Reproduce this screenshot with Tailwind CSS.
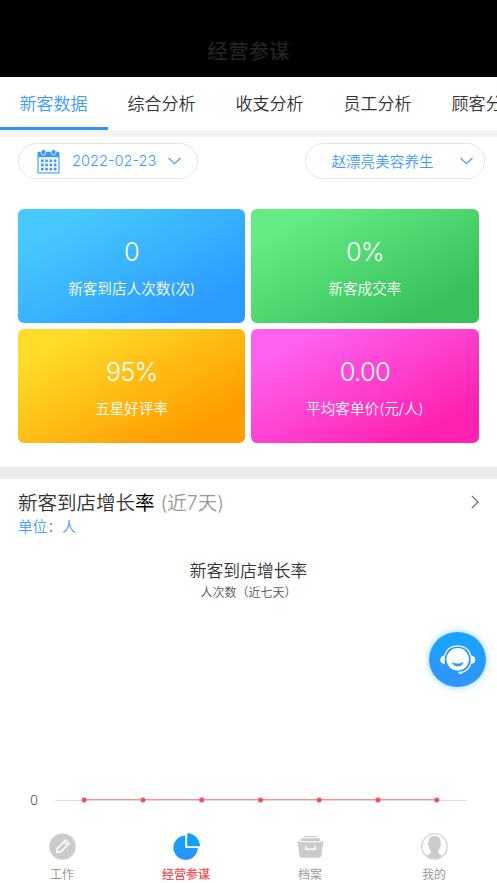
<!DOCTYPE html>
<html lang="zh-CN">
<head>
<meta charset="UTF-8">
<meta name="viewport" content="width=device-width, initial-scale=1">
<title>经营参谋</title>
<script src="https://cdn.jsdelivr.net/npm/@tailwindcss/browser@4"></script>
</head>
<body class="relative flex h-[883px] w-[497px] flex-col overflow-hidden bg-white font-[Inter,'Noto_Sans_CJK_SC',sans-serif] font-[350] text-[#333]">
  <header class="flex h-[77px] shrink-0 items-end justify-center bg-black pb-[10px]">
    <h1 class="text-[20.6px] leading-[30px] font-medium text-[#222]">经营参谋</h1>
  </header>

  <nav class="flex h-[53px] shrink-0 overflow-hidden text-[17px] leading-[55px]">
    <a class="w-[108px] shrink-0 border-b-[3px] border-[#2e95ff] pr-px text-center text-[#3b9aff]">新客数据</a>
    <a class="w-[108px] shrink-0 pr-px text-center">综合分析</a>
    <a class="w-[108px] shrink-0 pr-px text-center">收支分析</a>
    <a class="w-[108px] shrink-0 pr-px text-center">员工分析</a>
    <a class="w-[108px] shrink-0 pr-px text-center">顾客分析</a>
  </nav>
  <div class="h-[7px] shrink-0 bg-[#f4f4f4]"></div>

  <section class="mt-[6px] flex h-[36px] shrink-0 justify-between pr-[12px] pl-[18px] text-[14.6px] leading-[36px] text-[#3b9aff]">
    <button class="flex w-[180px] items-center rounded-full border border-[#e4e4e4] pl-[18px]">
      <svg class="h-[25px] w-[23px]" viewBox="0 0 23 25" fill="none">
        <rect x="0.5" y="2.8" width="22" height="21.8" rx="1.3" fill="#3b99fc"/>
        <rect x="1.6" y="8.2" width="19.8" height="15.2" fill="#fff"/>
        <rect x="4.2" y="0.5" width="4.4" height="5.6" rx="2.2" fill="#3b99fc" stroke="#fff" stroke-width="0.7"/>
        <rect x="14.4" y="0.5" width="4.4" height="5.6" rx="2.2" fill="#3b99fc" stroke="#fff" stroke-width="0.7"/>
        <path d="M4 11.7H19.4M4 15.9H19.4M4 20.1H19.4" stroke="#3b99fc" stroke-width="2.6" stroke-dasharray="2.6 1.67"/>
      </svg>
      <span class="ml-[12px] w-[84px] text-left whitespace-nowrap">2022-02-23</span>
      <svg class="ml-[12px] h-[8px] w-[13px]" viewBox="0 0 13 8" fill="none" stroke="#4aa3fc" stroke-width="1.3"><path d="M0.5 1L6.5 6.7L12.5 1"/></svg>
    </button>
    <button class="flex w-[180px] items-center rounded-full border border-[#e4e4e4] pl-[25px]">
      <span class="w-[103px] pt-px whitespace-nowrap">赵漂亮美容养生</span>
      <svg class="ml-[26px] h-[8px] w-[13px]" viewBox="0 0 13 8" fill="none" stroke="#4aa3fc" stroke-width="1.3"><path d="M0.5 1L6.5 6.7L12.5 1"/></svg>
    </button>
  </section>

  <section class="mt-[30px] ml-[18px] grid h-[233.5px] w-[460.5px] shrink-0 grid-cols-2 gap-[6px] self-start text-center text-white">
    <div class="rounded-[6px] bg-[linear-gradient(151deg,#47c9ff_15%,#2b9cfd_83%)] pt-[26px]">
      <p class="text-[25.5px] leading-[34px] tracking-[-0.7px]">0</p>
      <p class="mt-[7px] text-[14.6px] leading-[26px]">新客到店人次数(次)</p>
    </div>
    <div class="rounded-[6px] bg-[linear-gradient(151deg,#64eb84_15%,#38c15b_83%)] pt-[26px]">
      <p class="text-[25.5px] leading-[34px] tracking-[-0.9px]">0%</p>
      <p class="mt-[7px] text-[14.6px] leading-[26px]">新客成交率</p>
    </div>
    <div class="rounded-[6px] bg-[linear-gradient(151deg,#ffdc29_15%,#ff9c00_83%)] pt-[26px]">
      <p class="text-[25.5px] leading-[34px] tracking-[-0.9px]">95%</p>
      <p class="mt-[7px] text-[14.6px] leading-[26px]">五星好评率</p>
    </div>
    <div class="rounded-[6px] bg-[linear-gradient(151deg,#ff61ef_15%,#ff22b0_83%)] pt-[26px]">
      <p class="text-[25.5px] leading-[34px] tracking-[-0.7px]">0.00</p>
      <p class="mt-[7px] text-[14.6px] leading-[26px]">平均客单价(元/人)</p>
    </div>
  </section>

  <div class="mt-[24.5px] h-[12px] shrink-0 bg-[#ebebeb]"></div>

  <section class="flex shrink-0 items-start justify-between pt-[9px] pr-[18px] pl-[18px]">
    <div>
      <h2 class="text-[19.5px] leading-[30px] whitespace-nowrap">新客到店增长<span class="font-normal text-black">率</span><span class="ml-[6px] text-[#999]">(近7天)</span></h2>
      <p class="text-[14.6px] leading-[18px] text-[#3b9aff]">单位：人</p>
    </div>
    <svg class="mt-[7px] h-[14px] w-[8px]" viewBox="0 0 8 14" fill="none" stroke="#666" stroke-width="1.2"><path d="M0.8 0.8L7 7L0.8 13.2"/></svg>
  </section>

  <section class="flex shrink-0 flex-col items-center pt-[22px]">
    <h3 class="text-[16.8px] leading-[26px]">新客到店增长率</h3>
    <p class="text-[12px] leading-[18px] text-[#555]">人次数（近七天）</p>
    <div class="mt-[189px] flex w-full items-center pl-[30px]">
      <span class="w-[25px] text-[13px] leading-[18px] text-[#555]">0</span>
      <svg class="h-[6px] w-[412px]" viewBox="0 0 412 6">
        <path d="M0 3.4H412" stroke="#d8d8d8" stroke-width="1"/>
        <path d="M29 2.6H382" stroke="#ff8085" stroke-width="1"/>
        <g fill="#ff4d55"><circle cx="29.2" cy="3" r="2.5"/><circle cx="88" cy="3" r="2.5"/><circle cx="146.7" cy="3" r="2.5"/><circle cx="205.5" cy="3" r="2.5"/><circle cx="264.2" cy="3" r="2.5"/><circle cx="323" cy="3" r="2.5"/><circle cx="381.8" cy="3" r="2.5"/></g>
      </svg>
    </div>
  </section>

  <footer class="mt-auto grid h-[50px] w-[496px] shrink-0 grid-cols-4 text-[12px] leading-[18px] font-normal text-[#999]">
    <a class="flex flex-col items-center gap-[6px]">
      <svg class="h-[27px] w-[27px]" viewBox="0 0 27 27" fill="none">
        <circle cx="13.5" cy="13.6" r="13.2" fill="#cbcbcb"/>
        <path d="M7.8 19.3L8.4 15.4L16.7 7.1L20.2 10.5L11.8 18.9ZM14.9 8.9L18.4 12.3" stroke="#fff" stroke-width="1.6" stroke-linejoin="round"/>
      </svg>
      <span>工作</span>
    </a>
    <a class="flex flex-col items-center gap-[6px] font-medium text-[#ff4b56]">
      <svg class="h-[27px] w-[27px]" viewBox="0 0 27 27">
        <defs><linearGradient id="pie" x2="0" y2="1"><stop stop-color="#10a3ff"/><stop offset="1" stop-color="#2d92fc"/></linearGradient></defs>
        <path d="M12.2 2.4A12.2 12.2 0 1 0 24.8 15H12.2Z" fill="url(#pie)"/>
        <path d="M14.2 0.3A13 13 0 0 1 27 13.2H14.2Z" fill="#10a0ff"/>
      </svg>
      <span>经营参谋</span>
    </a>
    <a class="flex flex-col items-center gap-[6px]">
      <svg class="h-[27px] w-[27px]" viewBox="0 0 27 27" fill="#cbcbcb">
        <path d="M8 3H19Q20.2 3 20.5 4.3H6.5Q6.8 3 8 3ZM5.2 5.2H21.8Q23.4 5.4 23.6 8.2H3.4Q3.6 5.4 5.2 5.2Z"/>
        <path d="M0.5 8.5Q1.5 7.5 2.5 8.4Q3 9.2 4 9.2H23Q24 9.2 24.5 8.4Q25.5 7.5 26.5 8.5L24.4 22.8Q24.2 24.8 22.3 24.8H4.7Q2.8 24.8 2.6 22.8Z"/>
        <path d="M8.9 12.8V16.2H18.1V12.8" fill="none" stroke="#fff" stroke-width="1.5"/>
      </svg>
      <span>档案</span>
    </a>
    <a class="flex flex-col items-center gap-[6px]">
      <svg class="h-[27px] w-[27px]" viewBox="0 0 27 27">
        <circle cx="13.5" cy="13.5" r="12.7" fill="#fff" stroke="#cbcbcb" stroke-width="1.1"/>
        <path d="M13.5 3C17.8 3 19.8 5.5 19.6 9.5C20.6 10 20 13 19 13.8C18.6 16 17.7 17.3 17.2 18C17 20.8 18.6 21.4 21.5 22.8A12.5 12.5 0 0 1 5.5 22.8C8.4 21.4 10 20.8 9.8 18C9.3 17.3 8.4 16 8 13.8C7 13 6.4 10 7.4 9.5C7.2 5.5 9.2 3 13.5 3Z" fill="#cbcbcb"/>
      </svg>
      <span>我的</span>
    </a>
  </footer>

  <button class="absolute top-[632px] left-[429px] flex h-[55px] w-[57px] items-center justify-center rounded-[50%] bg-linear-to-b from-[#14a4ff] to-[#3094fc] shadow-[0_0_7px_#2c9cff80]">
    <svg class="h-[30px] w-[36px]" viewBox="0 0 36 30" fill="none">
      <circle cx="17.7" cy="14.3" r="11.2" fill="#fff"/>
      <path d="M4.3 11.5C6 4.6 11.2 0.9 17.7 0.9S29.4 4.6 31.1 11.5" stroke="#fff" stroke-width="1.3"/>
      <path d="M4.8 10.5V19Q0.3 18.5 0.3 14.8T4.8 10.5ZM30.6 10.5V19Q35.3 18.5 35.3 14.8T30.6 10.5Z" fill="#fff"/>
      <path d="M31 18C29.5 23.3 26 26.7 20.5 27.8" stroke="#fff" stroke-width="1.2"/>
      <ellipse cx="20.4" cy="27.8" rx="2" ry="1.3" fill="#fff"/>
      <path d="M11.7 17Q17.7 20 23.7 17Q22.5 21.4 17.7 21.4T11.7 17Z" fill="#2d9cff"/>
    </svg>
  </button>
</body>
</html>
